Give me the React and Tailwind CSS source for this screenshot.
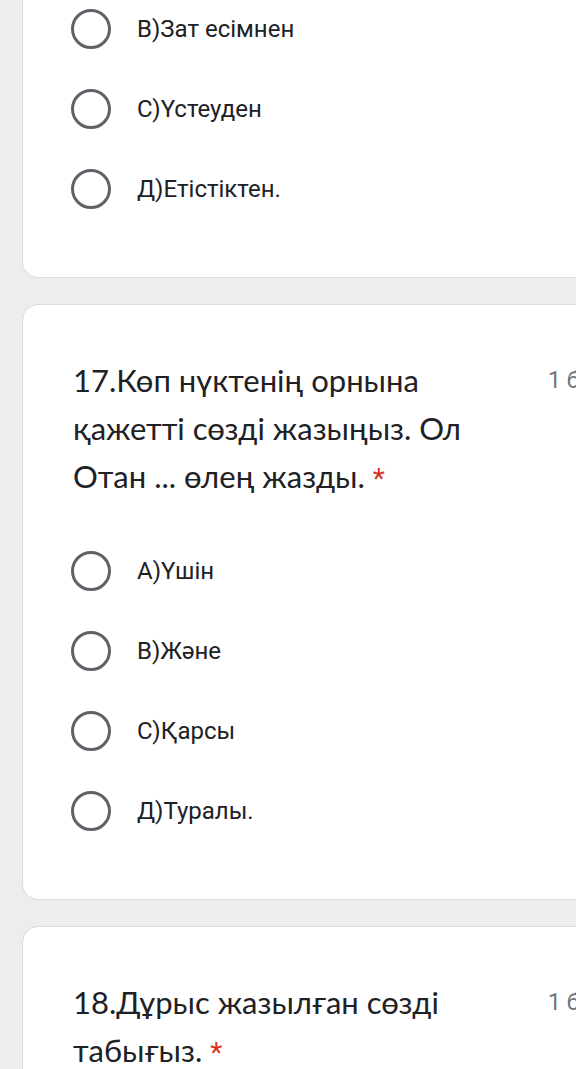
import React from 'react';

const Radio = ({ label }) => (
    <div className="flex items-center h-[80px]">
        <div className="w-[40px] h-[40px] rounded-full border-[3.5px] border-[#5f6368] ml-[48px] shrink-0" />
        <span className="ml-[26px] text-[24px] text-[#202124] font-['Roboto',sans-serif] leading-[30px]">{label}</span>
    </div>
);

const Question = ({ title, options }) => (
    <div className="ml-[22px] w-[620px] bg-white rounded-[16px] border border-[#dadce0] pt-[51px] pb-[48px] mt-[26px]">
        <div className="flex pl-[50px]">
            <h2 className="w-[425px] text-[31px] leading-[48px] text-[#202124] font-['Lato',sans-serif]">
                {title}{' '}
                <span className="text-[#d93025] text-[28px] leading-[24px] font-['Roboto',sans-serif]">*</span>
            </h2>
            <span className="ml-[50px] mt-[13px] text-[23px] leading-none text-[#70757a] font-['Roboto',sans-serif]">1 балл</span>
        </div>
        {options && (
            <div className="mt-[31px]">
                {options.map((o) => (
                    <Radio key={o} label={o} />
                ))}
            </div>
        )}
    </div>
);

export default function App() {
    return (
        <div className="w-[576px] h-[1069px] overflow-hidden bg-[#efedec]">
            <div className="ml-[22px] w-[620px] bg-white rounded-b-[16px] border border-t-0 border-[#dadce0] -mt-[11px] pb-[48px]">
                {["В)Зат есімнен", "С)Үстеуден", "Д)Етістіктен."].map((o) => (
                    <Radio key={o} label={o} />
                ))}
            </div>
            <Question
                title="17.Көп нүктенің орнына қажетті сөзді жазыңыз. Ол Отан ... өлең жазды."
                options={["А)Үшін", "В)Және", "С)Қарсы", "Д)Туралы."]}
            />
            <Question title="18.Дұрыс жазылған сөзді табығыз." />
        </div>
    );
}
